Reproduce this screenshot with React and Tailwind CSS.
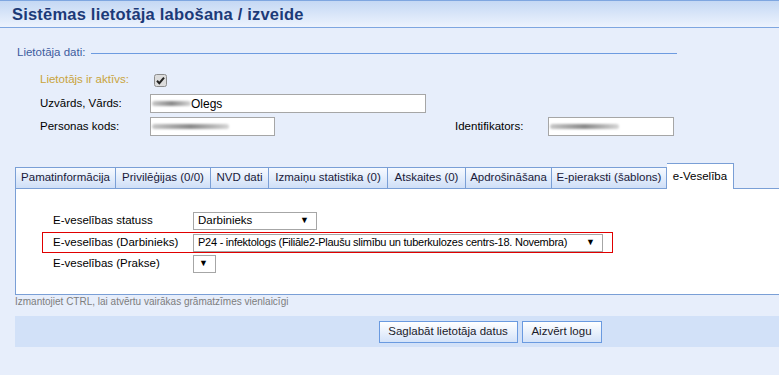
import React from 'react';

const tabs = [
  { label: 'Pamatinformācija', w: 'w-[101px]' },
  { label: 'Privilēģijas (0/0)', w: 'w-[95px]' },
  { label: 'NVD dati', w: 'w-[58px]' },
  { label: 'Izmaiņu statistika (0)', w: 'w-[119px]' },
  { label: 'Atskaites (0)', w: 'w-[78px]' },
  { label: 'Apdrošināšana', w: 'w-[86px]' },
  { label: 'E-pieraksti (šablons)', w: 'w-[115px]' },
];

function Blurred({ className }) {
  return <div className={`h-[5px] rounded-full bg-gradient-to-r from-[#c8c8c8] via-[#8a8a8a] to-[#d6d6d6] blur-[1px] ${className}`} />;
}

function Select({ value, className }) {
  return (
    <div className={`h-[18px] bg-white border border-[#a6a6a6] flex items-center justify-between pl-[4px] pr-[7px] text-[11.5px] text-black ${className}`}>
      <span className="whitespace-nowrap">{value}</span>
      <span className="text-[9px] leading-none tracking-normal">▼</span>
    </div>
  );
}

function Row({ label, children, boxed }) {
  return (
    <div className={`h-[21px] w-[571px] flex items-center pl-[10px] border ${boxed ? 'border-[#e00000]' : 'border-transparent'}`}>
      <div className="w-[140px] text-[11.5px] text-black">{label}</div>
      {children}
    </div>
  );
}

export default function App() {
  return (
    <div className="w-[779px] h-[375px] overflow-hidden bg-[#e7eefb] font-['Liberation_Sans',Arial,sans-serif]">
      <header className="h-[28px] border-t border-b border-[#7ea6e0] bg-gradient-to-b from-[#c4d8f4] to-[#edf3fd] pl-[12px] flex items-center">
        <h1 className="text-[16.5px] font-bold text-[#1c3a78] tracking-[0.2px]">Sistēmas lietotāja labošana / izveide</h1>
      </header>

      <div className="ml-[15px] w-[950px]">
        <div className="mt-[18px] pl-[2px] flex items-center h-[14px]">
          <span className="text-[11.5px] text-[#3e5c9e]">Lietotāja dati:</span>
          <div className="ml-[6px] w-[586px] h-px bg-[#6d9be0]" />
        </div>

        <div className="pl-[25px] text-[11.5px]">
          <div className="mt-[10px] h-[20px] flex items-center">
            <div className="w-[114px] text-[#c9a43c]">Lietotājs ir aktīvs:</div>
            <svg width="13" height="13" viewBox="0 0 13 13">
              <rect x="0.5" y="0.5" width="12" height="12" rx="2" fill="#dcdcdc" stroke="#8c8c8c" />
              <path d="M3 6.8 L5.3 9.2 L10 3.6" fill="none" stroke="#222" strokeWidth="2" />
            </svg>
          </div>

          <div className="mt-[4px] h-[19px] flex items-center">
            <div className="w-[110px] text-black">Uzvārds, Vārds:</div>
            <div className="w-[276px] h-[19px] bg-white border border-[#a6a6a6] flex items-center pl-[1px] text-[12px] text-black">
              <Blurred className="w-[39px]" />
              <span>Olegs</span>
            </div>
          </div>

          <div className="mt-[4px] h-[19px] flex items-center">
            <div className="w-[110px] text-black">Personas kods:</div>
            <div className="w-[125px] h-[19px] bg-white border border-[#a6a6a6] flex items-center pl-[1px]">
              <Blurred className="w-[77px]" />
            </div>
            <div className="ml-[180px] w-[93px] text-black">Identifikators:</div>
            <div className="w-[126px] h-[19px] bg-white border border-[#a6a6a6] flex items-center pl-[1px]">
              <Blurred className="w-[69px]" />
            </div>
          </div>
        </div>

        <div className="mt-[28px] h-[25px] flex items-end border-b border-[#7a9fd6]">
          {tabs.map((t, i) => (
            <div
              key={i}
              className={`${t.w} h-[21px] flex items-center justify-center border-t border-r border-[#7a9fd6] ${i === 0 ? 'border-l' : ''} bg-gradient-to-b from-[#f7faff] to-[#cfdff7] text-[11.5px] text-[#1a1a3a] whitespace-nowrap`}
            >
              {t.label}
            </div>
          ))}
          <div className="w-[67px] h-[26px] -mb-px bg-white border-t border-r border-[#7a9fd6] flex items-center justify-center text-[11.5px] text-black">
            e-Veselība
          </div>
        </div>

        <div className="h-[106px] bg-white border-l border-b border-[#7a9fd6] pt-[21px] pl-[26px]">
          <Row label="E-veselības statuss">
            <Select value="Darbinieks" className="w-[124px]" />
          </Row>
          <div className="mt-px">
            <Row label="E-veselības (Darbinieks)" boxed>
              <Select value="P24 - infektologs (Filiāle2-Plaušu slimību un tuberkulozes centrs-18. Novembra)" className="w-[410px] text-[11px] tracking-[-0.25px]" />
            </Row>
          </div>
          <Row label="E-veselības (Prakse)">
            <Select value="" className="w-[23px]" />
          </Row>
        </div>

        <div className="h-[12px] flex items-center text-[10px] text-[#7d7d7d]">
          Izmantojiet CTRL, lai atvērtu vairākas grāmatzīmes vienlaicīgi
        </div>

        <div className="mt-[9px] h-[31px] bg-[#d2e1f8] flex items-center justify-center gap-[4px]">
          <button className="w-[139px] h-[22px] border border-[#6a9ae0] bg-gradient-to-b from-[#ffffff] to-[#d4e3f9] text-[11.5px] text-[#1a1a2a]">
            Saglabāt lietotāja datus
          </button>
          <button className="w-[80px] h-[22px] border border-[#6a9ae0] bg-gradient-to-b from-[#ffffff] to-[#d4e3f9] text-[11.5px] text-[#1a1a2a]">
            Aizvērt logu
          </button>
        </div>
      </div>
    </div>
  );
}
